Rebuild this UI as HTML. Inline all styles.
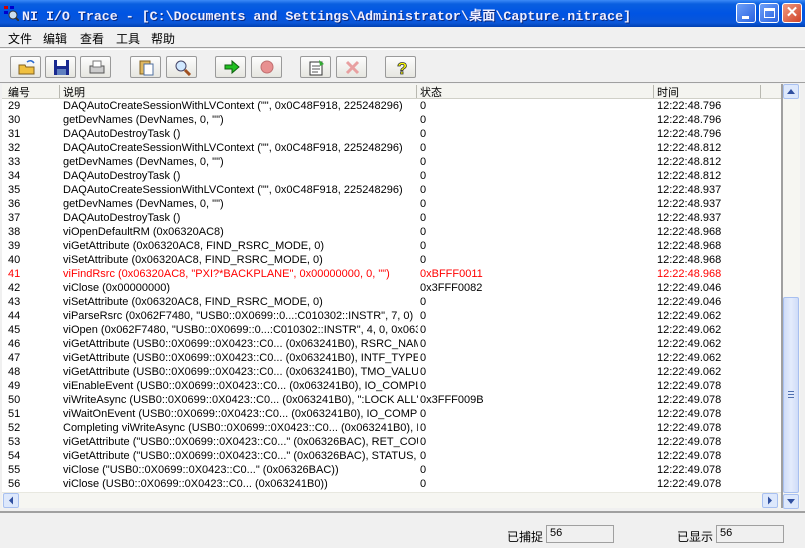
<!DOCTYPE html>
<html><head><meta charset="utf-8">
<style>
*{margin:0;padding:0;box-sizing:border-box}
body{width:805px;height:548px;overflow:hidden;background:#f0f0f0;font-family:"Liberation Sans","Noto Sans CJK SC",sans-serif;font-size:11px;position:relative}
.abs{position:absolute}
#title{left:0;top:0;width:805px;height:27px;background:linear-gradient(#3d8af7 0,#0a5fe0 4px,#0054e3 50%,#0a56d8 85%,#0040b0 100%)}
#title .t{left:22px;top:5px;color:#eef;font-family:"Liberation Mono","Noto Sans CJK SC",monospace;font-weight:bold;font-size:13.3px;white-space:nowrap;text-shadow:1px 1px #0a2a80}
.wb{top:3px;width:20px;height:20px;border:1px solid #fff;border-radius:3px;background:linear-gradient(135deg,#6ea0f8,#2a62e0)}
.wb.x{background:linear-gradient(135deg,#f09a80,#d0442a)}
#menu{left:0;top:27px;width:805px;height:21px;border-bottom:1px solid #a0a0a0;font-size:12px}
#menu span{position:absolute;top:3px}
#tb{left:0;top:49px;width:805px;height:34px;border-top:1px solid #fff;border-bottom:1px solid #a0a0a0}
.btn{position:absolute;top:6px;width:31px;height:22px;border:1px solid #9a9a9a;border-radius:2px;background:linear-gradient(#fdfdfd,#e6e6e0)}
.btn svg{position:absolute;left:7px;top:2px}
#list{left:2px;top:84px;width:779px;height:408px;background:#fff;overflow:hidden}
#hdr{position:absolute;left:0;top:0;width:779px;height:15px;background:#f4f4f0;border-bottom:1px solid #d0d0c8}
#hdr span{position:absolute;top:0;font-size:11px}
.sep{position:absolute;top:1px;width:1px;height:13px;background:#b8b8b0}
.r{position:absolute;left:0;height:14px;width:779px;white-space:nowrap;line-height:14px}
.r span{position:absolute;top:0;overflow:hidden}
.c1{left:6px}.c2{left:61px;width:355px}.c3{left:418px;width:230px}.c4{left:655px}
.red{color:#f00}
#hs{left:2px;top:492px;width:779px;height:16px;background:#f6f6f2;border-top:1px solid #e8e8e0}
.ar{position:absolute;width:16px;height:15px;border:1px solid #a8c0f0;background:#dde8fc;border-radius:2px}
#vs{left:783px;top:84px;width:17px;height:424px;background:#f6f6f2}
#status{left:0;top:511px;width:805px;height:37px;border-top:2px solid #a0a0a0}
.box{position:absolute;top:12px;width:68px;height:18px;border:1px solid #a0a0a0;padding:1px 3px;font-size:11px}
</style></head><body>
<div id="title" class="abs">
<svg class="abs" style="left:3px;top:5px" width="16" height="16"><rect x="1" y="1" width="4" height="3" fill="#c00"/><rect x="7" y="1" width="4" height="3" fill="#00c"/><rect x="1" y="6" width="4" height="3" fill="#00c"/><circle cx="10" cy="10" r="4" fill="#cde" stroke="#333"/><line x1="13" y1="13" x2="16" y2="16" stroke="#333" stroke-width="2"/></svg>
<div class="t abs">NI I/O Trace - [C:\Documents and Settings\Administrator\桌面\Capture.nitrace]</div>
<div class="wb abs" style="left:736px"><div class="abs" style="left:5px;top:12px;width:7px;height:3px;background:#fff"></div></div>
<div class="wb abs" style="left:759px"><div class="abs" style="left:4px;top:4px;width:11px;height:10px;border:1px solid #fff;border-top-width:3px"></div></div>
<div class="wb x abs" style="left:782px;color:#fff;font-weight:bold;font-size:15px;text-align:center;line-height:18px">✕</div>
</div>
<div id="menu" class="abs"><span style="left:8px">文件</span><span style="left:43px">编辑</span><span style="left:80px">查看</span><span style="left:116px">工具</span><span style="left:151px">帮助</span></div>
<div id="tb" class="abs">
<div class="btn" style="left:10px"><svg width="18" height="17"><path d="M1 6h6l1 2h8v7H1z" fill="#f0c040" stroke="#806020"/><path d="M9 3q4-3 7 1" stroke="#2a6ad0" fill="none" stroke-width="1.5"/></svg></div>
<div class="btn" style="left:45px"><svg width="18" height="17"><rect x="1" y="1" width="15" height="15" fill="#1a2a90"/><rect x="4" y="1" width="9" height="6" fill="#fff"/><rect x="4" y="10" width="9" height="6" fill="#6080c0"/></svg></div>
<div class="btn" style="left:80px"><svg width="18" height="17"><rect x="2" y="7" width="14" height="7" fill="#ccc" stroke="#555"/><rect x="5" y="2" width="8" height="6" fill="#fff" stroke="#777"/></svg></div>
<div class="btn" style="left:130px"><svg width="18" height="17"><rect x="2" y="2" width="10" height="13" fill="#e0b860" stroke="#806020"/><rect x="6" y="5" width="9" height="11" fill="#fff" stroke="#5070a0"/></svg></div>
<div class="btn" style="left:166px"><svg width="18" height="17"><circle cx="7" cy="7" r="5" fill="#d0e8ff" stroke="#446"/><line x1="11" y1="11" x2="16" y2="16" stroke="#a05020" stroke-width="3"/></svg></div>
<div class="btn" style="left:215px"><svg width="18" height="17"><path d="M2 6h7V2l7 6-7 6v-4H2z" fill="#20c020" stroke="#106010"/></svg></div>
<div class="btn" style="left:251px"><svg width="18" height="17"><circle cx="8" cy="8" r="6" fill="#e89090" stroke="#c07070"/></svg></div>
<div class="btn" style="left:300px"><svg width="18" height="17"><rect x="2" y="3" width="12" height="13" fill="#fff" stroke="#333"/><path d="M4 7h8M4 10h8M4 13h6" stroke="#555"/><path d="M11 1l5 4-4 2z" fill="#3a3"/></svg></div>
<div class="btn" style="left:336px"><svg width="18" height="17"><path d="M3 3l11 11M14 3L3 14" stroke="#e8a0a0" stroke-width="3"/></svg></div>
<div class="btn" style="left:385px"><svg width="18" height="17"><text x="4" y="15" font-size="17" font-weight="bold" fill="#ff0" stroke="#333" stroke-width=".8" font-family="Liberation Sans">?</text></svg></div>
</div>
<div id="list" class="abs">
<div id="hdr"><span style="left:6px">编号</span><div class="sep" style="left:57px"></div><span style="left:61px">说明</span><div class="sep" style="left:414px"></div><span style="left:418px">状态</span><div class="sep" style="left:651px"></div><span style="left:655px">时间</span><div class="sep" style="left:758px"></div></div>
<div id="rows"></div>
</div>
<div id="hs" class="abs"><div class="ar" style="left:1px;top:0"><svg width="14" height="13"><path d="M5 6.5l4-4v8z" fill="#3050a0"/></svg></div><div class="ar" style="left:760px;top:0"><svg width="14" height="13"><path d="M9 6.5l-4-4v8z" fill="#3050a0"/></svg></div></div>
<div class="abs" style="left:781px;top:84px;width:2px;height:424px;background:#a0a0a0"></div>
<div id="vs" class="abs">
<div class="ar" style="left:0;top:0"><svg width="14" height="13"><path d="M7 4l-4 5h8z" fill="#3050a0"/></svg></div>
<div class="abs" style="left:0;top:213px;width:16px;height:196px;border:1px solid #a8c0f0;background:linear-gradient(90deg,#cfdcf8,#e4ecfc,#cfdcf8);border-radius:2px"><div class="abs" style="left:4px;top:93px;width:6px;height:7px;border-top:1px solid #5070b0;border-bottom:1px solid #5070b0"><div style="margin-top:2px;height:1px;background:#5070b0"></div></div></div>
<div class="ar" style="left:0;top:410px"><svg width="14" height="13"><path d="M7 9l-4-5h8z" fill="#3050a0"/></svg></div>
</div>
<div id="status" class="abs">
<span class="abs" style="left:507px;top:15px;font-size:12px">已捕捉</span><div class="box" style="left:546px">56</div>
<span class="abs" style="left:677px;top:15px;font-size:12px">已显示</span><div class="box" style="left:716px">56</div>
</div>
<script>
var d=[
[29,'DAQAutoCreateSessionWithLVContext ("", 0x0C48F918, 225248296)','0','12:22:48.796'],
[30,'getDevNames (DevNames, 0, "")','0','12:22:48.796'],
[31,'DAQAutoDestroyTask ()','0','12:22:48.796'],
[32,'DAQAutoCreateSessionWithLVContext ("", 0x0C48F918, 225248296)','0','12:22:48.812'],
[33,'getDevNames (DevNames, 0, "")','0','12:22:48.812'],
[34,'DAQAutoDestroyTask ()','0','12:22:48.812'],
[35,'DAQAutoCreateSessionWithLVContext ("", 0x0C48F918, 225248296)','0','12:22:48.937'],
[36,'getDevNames (DevNames, 0, "")','0','12:22:48.937'],
[37,'DAQAutoDestroyTask ()','0','12:22:48.937'],
[38,'viOpenDefaultRM (0x06320AC8)','0','12:22:48.968'],
[39,'viGetAttribute (0x06320AC8, FIND_RSRC_MODE, 0)','0','12:22:48.968'],
[40,'viSetAttribute (0x06320AC8, FIND_RSRC_MODE, 0)','0','12:22:48.968'],
[41,'viFindRsrc (0x06320AC8, "PXI?*BACKPLANE", 0x00000000, 0, "")','0xBFFF0011','12:22:48.968'],
[42,'viClose (0x00000000)','0x3FFF0082','12:22:49.046'],
[43,'viSetAttribute (0x06320AC8, FIND_RSRC_MODE, 0)','0','12:22:49.046'],
[44,'viParseRsrc (0x062F7480, "USB0::0X0699::0...:C010302::INSTR", 7, 0)','0','12:22:49.062'],
[45,'viOpen (0x062F7480, "USB0::0X0699::0...:C010302::INSTR", 4, 0, 0x06326BAC)','0','12:22:49.062'],
[46,'viGetAttribute (USB0::0X0699::0X0423::C0... (0x063241B0), RSRC_NAME)','0','12:22:49.062'],
[47,'viGetAttribute (USB0::0X0699::0X0423::C0... (0x063241B0), INTF_TYPE)','0','12:22:49.062'],
[48,'viGetAttribute (USB0::0X0699::0X0423::C0... (0x063241B0), TMO_VALUE)','0','12:22:49.062'],
[49,'viEnableEvent (USB0::0X0699::0X0423::C0... (0x063241B0), IO_COMPLETION)','0','12:22:49.078'],
[50,'viWriteAsync (USB0::0X0699::0X0423::C0... (0x063241B0), ":LOCK ALL"','0x3FFF009B','12:22:49.078'],
[51,'viWaitOnEvent (USB0::0X0699::0X0423::C0... (0x063241B0), IO_COMPLETION)','0','12:22:49.078'],
[52,'Completing viWriteAsync (USB0::0X0699::0X0423::C0... (0x063241B0), IO)','0','12:22:49.078'],
[53,'viGetAttribute ("USB0::0X0699::0X0423::C0..." (0x06326BAC), RET_COUNT)','0','12:22:49.078'],
[54,'viGetAttribute ("USB0::0X0699::0X0423::C0..." (0x06326BAC), STATUS, 0)','0','12:22:49.078'],
[55,'viClose ("USB0::0X0699::0X0423::C0..." (0x06326BAC))','0','12:22:49.078'],
[56,'viClose (USB0::0X0699::0X0423::C0... (0x063241B0))','0','12:22:49.078']];
var h='';d.forEach(function(r,i){h+='<div class="r'+(r[0]==41?' red':'')+'" style="top:'+(15+i*14)+'px"><span class="c1">'+r[0]+'</span><span class="c2">'+r[1].replace(/</g,'&lt;')+'</span><span class="c3">'+r[2]+'</span><span class="c4">'+r[3]+'</span></div>';});
document.getElementById('rows').innerHTML=h;
</script>
</body></html>
